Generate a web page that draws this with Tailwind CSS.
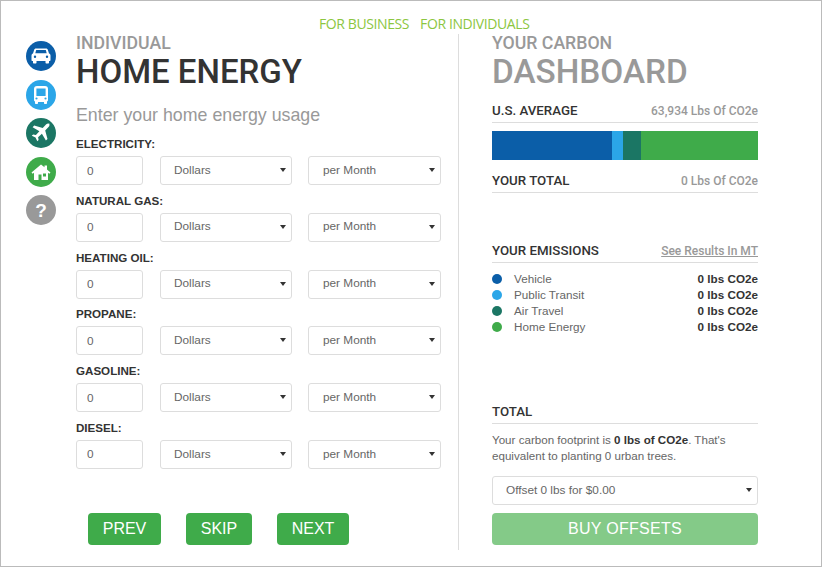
<!DOCTYPE html>
<html lang="en">
  <head>
    <meta charset="UTF-8" />
    <title>Home Energy</title>
    <script src="https://cdn.jsdelivr.net/npm/@tailwindcss/browser@4"></script>
  </head>
  <body class="bg-white">
    <div class="w-[822px] h-[567px] border border-[#bbbbbb] overflow-hidden bg-white font-['Liberation_Sans',sans-serif] text-[#666]">
      <!-- Top links -->
      <nav class="h-[33px] pt-[13px] pl-[318px] flex gap-[11px] text-[14px] leading-[20px] text-[#8cc63f] font-['Open_Sans',sans-serif] tracking-[-0.4px]">
        <a href="#">FOR BUSINESS</a>
        <a href="#">FOR INDIVIDUALS</a>
      </nav>

      <div class="flex h-[516px]">
        <!-- Side icons -->
        <aside class="w-[75px] pl-[25px] pt-[7px] flex flex-col gap-[8.5px] shrink-0">
          <div class="w-[30px] h-[30px] rounded-full bg-[#0b5ea8] flex items-center justify-center">
            <svg width="20" height="18" viewBox="0 0 20 18" fill="#fff"><path fill-rule="evenodd" d="M5 1.500h10c1 0 1.600.6 1.900 1.400L18 6.500c1 .4 1.500 1.200 1.500 2.200v4.300c0 .6-.4 1-1 1H18v1.500c0 .6-.4 1-1 1h-1.500c-.6 0-1-.4-1-1V14h-9v1.500c0 .6-.4 1-1 1H3c-.6 0-1-.4-1-1V14h-.5c-.6 0-1-.4-1-1V8.700c0-1 .5-1.800 1.500-2.200l1.100-3.600C3.400 2.100 4 1.500 5 1.500zM5.200 3 4.300 6.200h11.400L14.800 3H5.200zM4 8.500a1.200 1.200 0 1 0 0 2.400 1.200 1.200 0 0 0 0-2.400zm12 0a1.200 1.200 0 1 0 0 2.400 1.200 1.200 0 0 0 0-2.400z"/></svg>
          </div>
          <div class="w-[30px] h-[30px] rounded-full bg-[#2ba6e8] flex items-center justify-center">
            <svg width="18" height="20" viewBox="0 0 18 20" fill="#fff"><path fill-rule="evenodd" d="M5 1h8c2 0 3 1 3 3v11c0 .8-.5 1.300-1 1.500V18c0 .6-.4 1-1 1h-1c-.6 0-1-.4-1-1v-1H6v1c0 .6-.4 1-1 1H4c-.6 0-1-.4-1-1v-1.500c-.5-.2-1-.7-1-1.500V4c0-2 1-3 3-3zm-.6 2.500v7.500h9.200V3.500H4.400zM4.500 12.400a1.100 1.100 0 1 0 0 2.200 1.100 1.100 0 0 0 0-2.200zm9 0a1.100 1.100 0 1 0 0 2.200 1.100 1.100 0 0 0 0-2.200z"/></svg>
          </div>
          <div class="w-[30px] h-[30px] rounded-full bg-[#1b7664] flex items-center justify-center">
            <svg width="22" height="22" viewBox="0 0 22 22" fill="#fff"><path d="M19.800 2.200c-1-1-2.700-.7-3.800.4l-3.300 3.300L4.200 3.600 2.600 5.200l6.800 4-3.500 3.800-2.800-.5-1.300 1.300 3.700 1.800 1.800 3.700 1.300-1.300-.5-2.800 3.800-3.500 4 6.800 1.600-1.600-2.300-8.500 3.300-3.300c1.100-1.100 1.400-2.900.4-3.900z"/></svg>
          </div>
          <div class="w-[30px] h-[30px] rounded-full bg-[#3fab4a] flex items-center justify-center">
            <svg width="20" height="18" viewBox="0 0 20 18" fill="#fff"><path fill-rule="evenodd" d="M10 1.500.5 9.500l1.200 1.300L3 9.800V17h4.500v-5.500h3V17H17V9.800l1.300 1 1.200-1.300L16 6.500v-4h-2.500v1.800zM12 10.500h3v3h-3z"/></svg>
          </div>
          <div class="w-[30px] h-[30px] rounded-full bg-[#999] flex items-center justify-center text-white text-[19px] font-bold leading-none">?</div>
        </aside>

        <!-- Form column -->
        <main class="w-[383px] shrink-0 border-r border-[#ddd] flex flex-col">
          <p class="font-['Roboto',sans-serif] font-medium text-[17.7px] leading-[20px] text-[#999] -mt-px">INDIVIDUAL</p>
          <h1 class="font-['Roboto',sans-serif] font-medium text-[33px] leading-[36px] text-[#333] mt-px">HOME ENERGY</h1>
          <p class="text-[17.8px] leading-[22px] text-[#999] mt-[14px]">Enter your home energy usage</p>

          <form class="mt-[11px] flex flex-col gap-[8.8px]">
            <div>
              <label class="block text-[11.6px] leading-[14px] font-bold text-[#333] mb-[5px]">ELECTRICITY:</label>
              <div class="flex gap-[17px]">
                <input value="0" class="w-[67px] h-[29px] pl-[10px] text-[11.8px] border border-[#ddd] rounded-[3px]" />
                <div class="relative w-[132px] h-[29px]">
                  <select class="appearance-none w-full h-full pl-[13px] text-[11.8px] bg-white border border-[#ddd] rounded-[3px]"><option>Dollars</option></select>
                  <span class="absolute right-[6px] top-[12px] border-x-[3px] border-t-[4px] border-x-transparent border-t-[#333] pointer-events-none"></span>
                </div>
                <div class="relative w-[133px] h-[29px] -ml-px">
                  <select class="appearance-none w-full h-full pl-[14px] text-[11.8px] bg-white border border-[#ddd] rounded-[3px]"><option>per Month</option></select>
                  <span class="absolute right-[6px] top-[12px] border-x-[3px] border-t-[4px] border-x-transparent border-t-[#333] pointer-events-none"></span>
                </div>
              </div>
            </div>
            <div>
              <label class="block text-[11.6px] leading-[14px] font-bold text-[#333] mb-[5px]">NATURAL GAS:</label>
              <div class="flex gap-[17px]">
                <input value="0" class="w-[67px] h-[29px] pl-[10px] text-[11.8px] border border-[#ddd] rounded-[3px]" />
                <div class="relative w-[132px] h-[29px]">
                  <select class="appearance-none w-full h-full pl-[13px] text-[11.8px] bg-white border border-[#ddd] rounded-[3px]"><option>Dollars</option></select>
                  <span class="absolute right-[6px] top-[12px] border-x-[3px] border-t-[4px] border-x-transparent border-t-[#333] pointer-events-none"></span>
                </div>
                <div class="relative w-[133px] h-[29px] -ml-px">
                  <select class="appearance-none w-full h-full pl-[14px] text-[11.8px] bg-white border border-[#ddd] rounded-[3px]"><option>per Month</option></select>
                  <span class="absolute right-[6px] top-[12px] border-x-[3px] border-t-[4px] border-x-transparent border-t-[#333] pointer-events-none"></span>
                </div>
              </div>
            </div>
            <div>
              <label class="block text-[11.6px] leading-[14px] font-bold text-[#333] mb-[5px]">HEATING OIL:</label>
              <div class="flex gap-[17px]">
                <input value="0" class="w-[67px] h-[29px] pl-[10px] text-[11.8px] border border-[#ddd] rounded-[3px]" />
                <div class="relative w-[132px] h-[29px]">
                  <select class="appearance-none w-full h-full pl-[13px] text-[11.8px] bg-white border border-[#ddd] rounded-[3px]"><option>Dollars</option></select>
                  <span class="absolute right-[6px] top-[12px] border-x-[3px] border-t-[4px] border-x-transparent border-t-[#333] pointer-events-none"></span>
                </div>
                <div class="relative w-[133px] h-[29px] -ml-px">
                  <select class="appearance-none w-full h-full pl-[14px] text-[11.8px] bg-white border border-[#ddd] rounded-[3px]"><option>per Month</option></select>
                  <span class="absolute right-[6px] top-[12px] border-x-[3px] border-t-[4px] border-x-transparent border-t-[#333] pointer-events-none"></span>
                </div>
              </div>
            </div>
            <div>
              <label class="block text-[11.6px] leading-[14px] font-bold text-[#333] mb-[5px]">PROPANE:</label>
              <div class="flex gap-[17px]">
                <input value="0" class="w-[67px] h-[29px] pl-[10px] text-[11.8px] border border-[#ddd] rounded-[3px]" />
                <div class="relative w-[132px] h-[29px]">
                  <select class="appearance-none w-full h-full pl-[13px] text-[11.8px] bg-white border border-[#ddd] rounded-[3px]"><option>Dollars</option></select>
                  <span class="absolute right-[6px] top-[12px] border-x-[3px] border-t-[4px] border-x-transparent border-t-[#333] pointer-events-none"></span>
                </div>
                <div class="relative w-[133px] h-[29px] -ml-px">
                  <select class="appearance-none w-full h-full pl-[14px] text-[11.8px] bg-white border border-[#ddd] rounded-[3px]"><option>per Month</option></select>
                  <span class="absolute right-[6px] top-[12px] border-x-[3px] border-t-[4px] border-x-transparent border-t-[#333] pointer-events-none"></span>
                </div>
              </div>
            </div>
            <div>
              <label class="block text-[11.6px] leading-[14px] font-bold text-[#333] mb-[5px]">GASOLINE:</label>
              <div class="flex gap-[17px]">
                <input value="0" class="w-[67px] h-[29px] pl-[10px] text-[11.8px] border border-[#ddd] rounded-[3px]" />
                <div class="relative w-[132px] h-[29px]">
                  <select class="appearance-none w-full h-full pl-[13px] text-[11.8px] bg-white border border-[#ddd] rounded-[3px]"><option>Dollars</option></select>
                  <span class="absolute right-[6px] top-[12px] border-x-[3px] border-t-[4px] border-x-transparent border-t-[#333] pointer-events-none"></span>
                </div>
                <div class="relative w-[133px] h-[29px] -ml-px">
                  <select class="appearance-none w-full h-full pl-[14px] text-[11.8px] bg-white border border-[#ddd] rounded-[3px]"><option>per Month</option></select>
                  <span class="absolute right-[6px] top-[12px] border-x-[3px] border-t-[4px] border-x-transparent border-t-[#333] pointer-events-none"></span>
                </div>
              </div>
            </div>
            <div>
              <label class="block text-[11.6px] leading-[14px] font-bold text-[#333] mb-[5px]">DIESEL:</label>
              <div class="flex gap-[17px]">
                <input value="0" class="w-[67px] h-[29px] pl-[10px] text-[11.8px] border border-[#ddd] rounded-[3px]" />
                <div class="relative w-[132px] h-[29px]">
                  <select class="appearance-none w-full h-full pl-[13px] text-[11.8px] bg-white border border-[#ddd] rounded-[3px]"><option>Dollars</option></select>
                  <span class="absolute right-[6px] top-[12px] border-x-[3px] border-t-[4px] border-x-transparent border-t-[#333] pointer-events-none"></span>
                </div>
                <div class="relative w-[133px] h-[29px] -ml-px">
                  <select class="appearance-none w-full h-full pl-[14px] text-[11.8px] bg-white border border-[#ddd] rounded-[3px]"><option>per Month</option></select>
                  <span class="absolute right-[6px] top-[12px] border-x-[3px] border-t-[4px] border-x-transparent border-t-[#333] pointer-events-none"></span>
                </div>
              </div>
            </div>
          </form>

          <div class="mt-[44px] ml-[12px] flex gap-[25px] text-white text-[16px]">
            <button class="w-[73px] h-[32px] rounded-[4px] bg-[#3fab4a]">PREV</button>
            <button class="w-[66px] h-[32px] rounded-[4px] bg-[#3fab4a]">SKIP</button>
            <button class="w-[72px] h-[32px] rounded-[4px] bg-[#3fab4a]">NEXT</button>
          </div>
        </main>

        <!-- Dashboard column -->
        <section class="w-[266px] ml-[33px] shrink-0 flex flex-col">
          <p class="font-['Roboto',sans-serif] font-medium text-[17.7px] leading-[20px] text-[#999] -mt-px">YOUR CARBON</p>
          <h2 class="font-['Roboto',sans-serif] font-medium text-[33.3px] leading-[36px] text-[#999] mt-px">DASHBOARD</h2>

          <div class="mt-[9px] h-[24px] border-b border-[#ddd] flex justify-between items-center font-['Roboto',sans-serif]">
            <span class="text-[13.3px] font-medium text-[#333]">U.S. AVERAGE</span>
            <span class="text-[12px] font-medium text-[#999]">63,934 Lbs Of CO2e</span>
          </div>
          <div class="mt-[8px] h-[29px] flex">
            <div class="w-[120px] bg-[#0b5ea8]"></div>
            <div class="w-[10.5px] bg-[#2ba6e8]"></div>
            <div class="w-[18.5px] bg-[#1b7664]"></div>
            <div class="flex-1 bg-[#3fab4a]"></div>
          </div>
          <div class="mt-[9px] h-[24px] border-b border-[#ddd] flex justify-between items-center font-['Roboto',sans-serif]">
            <span class="text-[13.3px] font-medium text-[#333]">YOUR TOTAL</span>
            <span class="text-[12px] font-medium text-[#999]">0 Lbs Of CO2e</span>
          </div>

          <div class="mt-[46px] h-[24px] border-b border-[#ddd] flex justify-between items-center font-['Roboto',sans-serif]">
            <span class="text-[13.3px] font-medium text-[#333]">YOUR EMISSIONS</span>
            <a href="#" class="text-[12px] font-medium text-[#999] underline">See Results In MT</a>
          </div>
          <ul class="mt-[8px] text-[11.7px] leading-[16px]">
            <li class="flex items-center"><span class="w-[10px] h-[10px] rounded-full bg-[#0b5ea8] mr-[12px]"></span>Vehicle<b class="ml-auto text-[#333]">0 lbs CO2e</b></li>
            <li class="flex items-center"><span class="w-[10px] h-[10px] rounded-full bg-[#2ba6e8] mr-[12px]"></span>Public Transit<b class="ml-auto text-[#333]">0 lbs CO2e</b></li>
            <li class="flex items-center"><span class="w-[10px] h-[10px] rounded-full bg-[#1b7664] mr-[12px]"></span>Air Travel<b class="ml-auto text-[#333]">0 lbs CO2e</b></li>
            <li class="flex items-center"><span class="w-[10px] h-[10px] rounded-full bg-[#3fab4a] mr-[12px]"></span>Home Energy<b class="ml-auto text-[#333]">0 lbs CO2e</b></li>
          </ul>

          <div class="mt-[65px] h-[24px] border-b border-[#ddd] flex items-center font-['Roboto',sans-serif]">
            <span class="text-[13.3px] font-medium text-[#333]">TOTAL</span>
          </div>
          <p class="mt-[8px] text-[11.6px] leading-[16px]">Your carbon footprint is <b class="text-[#333]">0 lbs of CO2e</b>. That's equivalent to planting 0 urban trees.</p>
          <div class="relative mt-[12px] h-[29px]">
            <select class="appearance-none w-full h-full pl-[13px] text-[11.8px] bg-white border border-[#ddd] rounded-[3px]"><option>Offset 0 lbs for $0.00</option></select>
            <span class="absolute right-[6px] top-[12px] border-x-[3px] border-t-[4px] border-x-transparent border-t-[#333] pointer-events-none"></span>
          </div>
          <button class="mt-[8px] h-[32px] rounded-[4px] bg-[#84ca88] text-white text-[16px] tracking-[0.3px]">BUY OFFSETS</button>
        </section>
      </div>
    </div>
  </body>
</html>
